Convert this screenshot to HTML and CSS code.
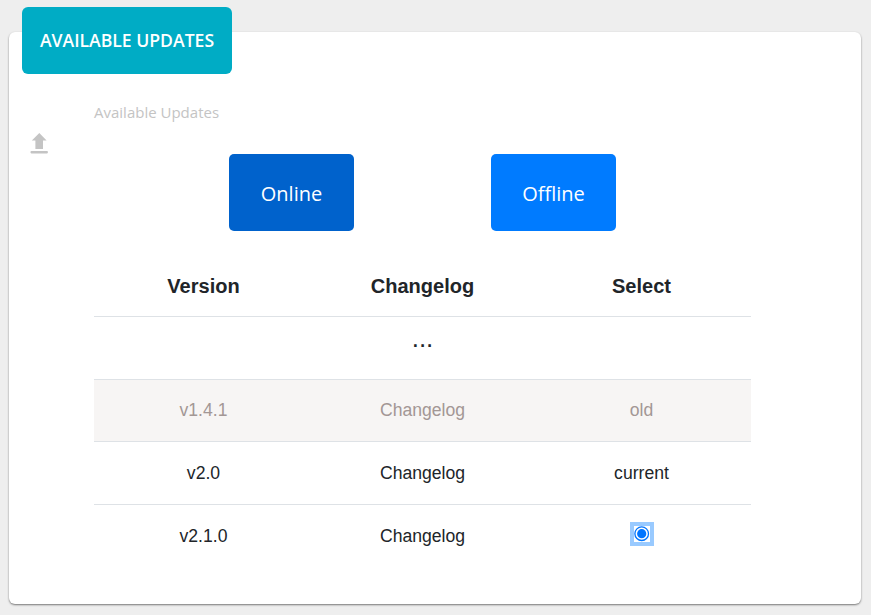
FILE: index.html
```html
<!DOCTYPE html>
<html lang="en">
<head>
<meta charset="utf-8">
<title>Available Updates</title>
<link rel="stylesheet" href="styles.css">
</head>
<body>
<section class="card">
  <h1 class="card-title">AVAILABLE UPDATES</h1>
  <div class="card-body">
    <svg class="upload-icon" viewBox="0 0 18 22" aria-hidden="true"><path d="M9.3 1 L16.6 8.5 H13 V17 H5.4 V8.5 H1.8 Z"/><rect x="0.5" y="19.1" width="17.4" height="2.3" rx="0.8"/></svg>
    <div class="content">
      <p class="caption">Available Updates</p>
      <div class="actions">
        <button class="button active" type="button">Online</button>
        <button class="button" type="button">Offline</button>
      </div>
      <table class="versions">
        <thead><tr><th>Version</th><th>Changelog</th><th>Select</th></tr></thead>
        <tbody>
          <tr><td colspan="3" class="more">...</td></tr>
          <tr class="old"><td>v1.4.1</td><td>Changelog</td><td>old</td></tr>
          <tr><td>v2.0</td><td>Changelog</td><td>current</td></tr>
          <tr><td>v2.1.0</td><td>Changelog</td><td class="choice"><span class="radio" role="radio" aria-checked="true"><svg viewBox="0 0 16 16"><circle class="ring" cx="7.7" cy="7.7" r="6.8"/><circle class="dot" cx="7.7" cy="7.7" r="4.6"/></svg></span></td></tr>
        </tbody>
      </table>
    </div>
  </div>
</section>
</body>
</html>
```
FILE: styles.css
```css
* { box-sizing: border-box; }
body {
  margin: 0;
  padding: 32px 10px 0 9px;
  height: 615px;
  overflow: hidden;
  background: #eee;
  color: #212529;
  font-family: "Liberation Sans", Arial, sans-serif;
}
.card {
  height: 572px;
  display: flex;
  flex-direction: column;
  align-items: flex-start;
  background: #fff;
  border-radius: 6px;
  box-shadow: 0 1px 2px rgba(0, 0, 0, .5);
}
.card-title {
  flex: none;
  width: 210px;
  height: 67px;
  margin: -25px 0 0 13px;
  border-radius: 6px;
  background: #00acc5;
  color: #fff;
  font: 600 17.6px/67px "Open Sans", sans-serif;
  text-align: center;
  white-space: nowrap;
}
.card-body {
  display: flex;
  align-items: flex-start;
  padding-left: 21px;
}
.upload-icon {
  width: 18px;
  height: 22px;
  margin: 58px 46px 0 0;
  fill: #c4c4c4;
}
.content { width: 657px; padding-top: 28px; }
.caption {
  margin: 0;
  height: 52px;
  color: #c4c4c4;
  font: 400 15px/21px "Open Sans", sans-serif;
}
.actions {
  display: flex;
  gap: 137px;
  padding-left: 135px;
}
.button {
  width: 125px;
  height: 77px;
  padding: 2px 0 0;
  border: 0;
  border-radius: 5px;
  background: #007bff;
  color: #fff;
  font: 400 20px/27px "Open Sans", sans-serif;
}
.button.active { background: #0062cc; }
.versions {
  width: 100%;
  margin-top: 25px;
  table-layout: fixed;
  border-collapse: separate;
  border-spacing: 0;
  text-align: center;
}
.versions th {
  height: 60px;
  padding: 0;
  font-size: 20px;
  line-height: 24px;
}
.versions td {
  height: 62.67px;
  padding: 0;
  border-top: 1px solid #dee2e6;
  font-size: 17.6px;
  line-height: 26px;
  vertical-align: middle;
}
.versions .more {
  padding-bottom: 20px;
  font-size: 26px;
}
.versions .choice { padding-bottom: 6px; }
.old { background: #f7f5f4; color: #a39795; }
.radio {
  display: inline-flex;
  align-items: center;
  justify-content: center;
  width: 24px;
  height: 24px;
  background: #99caff;
  vertical-align: middle;
}
.radio svg { width: 16px; height: 16px; background: #fff; }
.ring { fill: #fff; stroke: #0075ff; stroke-width: 1.3; }
.dot { fill: #0075ff; }
```
